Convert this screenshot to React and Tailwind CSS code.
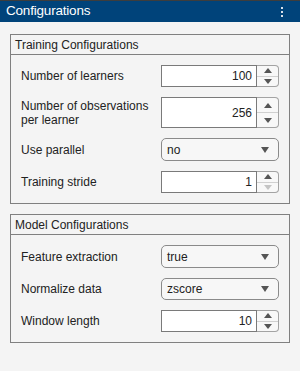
import React from "react";

const Up = ({ disabled }) => (
  <svg width="8" height="5" viewBox="0 0 8 5">
    <path d="M0 5 L4 0 L8 5 Z" fill={disabled ? "#c4c4c4" : "#555555"} />
  </svg>
);

const Down = ({ disabled }) => (
  <svg width="8" height="5" viewBox="0 0 8 5">
    <path d="M0 0 L8 0 L4 5 Z" fill={disabled ? "#c4c4c4" : "#555555"} />
  </svg>
);

const Spinner = ({ value, atMin = false }) => (
  <div className="flex h-full">
    <div className="flex-1 bg-white border border-[#7a7a7a] flex items-center justify-end pr-[4px]">
      {value}
    </div>
    <div className="w-[22px] flex flex-col border border-l-0 border-[#a3a3a3] rounded-r-[4px] bg-[#f8f8f8]">
      <div className="flex-1 flex items-center justify-center border-b border-[#d0d0d0]">
        <Up />
      </div>
      <div className="flex-1 flex items-center justify-center">
        <Down disabled={atMin} />
      </div>
    </div>
  </div>
);

const Dropdown = ({ value }) => (
  <div className="h-full flex items-center justify-between pl-[5px] pr-[9px] border border-[#8a8a8a] rounded-[5px] bg-[#f7f7f7]">
    <span>{value}</span>
    <svg width="8" height="6" viewBox="0 0 8 6">
      <path d="M0 0 L8 0 L4 6 Z" fill="#555555" />
    </svg>
  </div>
);

const Panel = ({ title, children }) => (
  <div className="border border-[#808080]">
    <div className="h-[20px] px-[4px] flex items-center border-b border-[#808080]">{title}</div>
    <div className="grid grid-cols-[1fr_118px] gap-y-[10px] items-center px-[10px] py-[10px]">
      {children}
    </div>
  </div>
);

export default function App() {
  return (
    <div className="w-[300px] h-[371px] bg-[#f4f4f4] border-t border-[#3d3d3d] font-['Liberation_Sans',Arial,sans-serif] text-[12px] text-[#222222] overflow-hidden">
      <div className="h-[21px] bg-[#00437a] flex items-center justify-between pl-[6px] pr-[17px]">
        <span className="text-white text-[13.5px] tracking-[-0.2px]">Configurations</span>
        <div className="flex flex-col gap-[2px]">
          <div className="w-[2px] h-[2px] bg-[#d8e0ea]" />
          <div className="w-[2px] h-[2px] bg-[#d8e0ea]" />
          <div className="w-[2px] h-[2px] bg-[#d8e0ea]" />
        </div>
      </div>

      <div className="px-[10px] pt-[12px] flex flex-col gap-[10px]">
        <Panel title="Training Configurations">
          <span>Number of learners</span>
          <div className="h-[22px]"><Spinner value="100" /></div>

          <span className="leading-[14px]">Number of observations<br />per learner</span>
          <div className="h-[31px]"><Spinner value="256" /></div>

          <span>Use parallel</span>
          <div className="h-[23px]"><Dropdown value="no" /></div>

          <span>Training stride</span>
          <div className="h-[22px]"><Spinner value="1" atMin /></div>
        </Panel>

        <Panel title="Model Configurations">
          <span>Feature extraction</span>
          <div className="h-[23px]"><Dropdown value="true" /></div>

          <span>Normalize data</span>
          <div className="h-[22px]"><Dropdown value="zscore" /></div>

          <span>Window length</span>
          <div className="h-[22px]"><Spinner value="10" /></div>
        </Panel>
      </div>
    </div>
  );
}
